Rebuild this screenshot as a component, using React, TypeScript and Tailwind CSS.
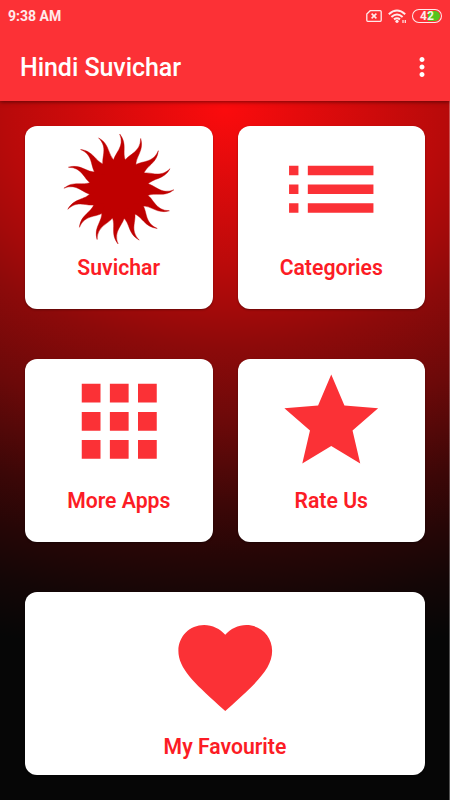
import React from "react";
import { MdApps, MdFavorite, MdList, MdMoreVert, MdStar } from "react-icons/md";

const rays = Array.from({ length: 16 }, (_, i) => i * 22.5);

const SunIcon = () => (
  <svg viewBox="-55.9 -56 112.5 112.5" className="size-[112.5px] fill-[#bf0000] stroke-[#bf0000]" strokeWidth=".4">
    <circle r="29" />
    {rays.map((angle) => (
      <path
        key={angle}
        transform={`rotate(${angle})`}
        d="M-5.4 -28.2C-4 -36.5 6 -42 .8 -55C9 -45 2.6 -36 7 -28L0 -20Z"
      />
    ))}
  </svg>
);

const StatusBar = () => (
  <div className="flex h-8 items-center justify-between pl-2 pr-2 text-white/90">
    <span className="text-[14px] font-bold leading-4">9:38 AM</span>
    <div className="flex items-center">
      <svg viewBox="0 0 16 12" className="h-3 w-4" fill="none" stroke="currentColor">
        <path d="M4.2 .7H14.2Q15.2 .7 15.2 1.7V10.3Q15.2 11.3 14.2 11.3H1.8Q.8 11.3 .8 10.3V4Z" strokeWidth="1.3" />
        <path d="M5.6 3.7L10.4 8.3M10.4 3.7L5.6 8.3" strokeWidth="1.6" />
      </svg>
      <svg viewBox="0 0 20 15" className="ml-[6px] mr-[4px] h-[15px] w-5" fill="none" stroke="currentColor">
        <path d="M.8 5.2Q9 -2.2 17.2 5.2M3.4 8Q9 3 14.6 8M6 10.4Q9 8 12 10.4" strokeWidth="2" />
        <circle cx="9" cy="12.3" r="1.6" fill="currentColor" stroke="none" />
        <path d="M15 11V14M17.3 11V14" strokeWidth="1.2" />
      </svg>
      <div className="flex h-[14px] w-[30px] items-center justify-center rounded-full border-[1.5px] border-current bg-[linear-gradient(to_right,transparent_53%,#55c41d_53%)] bg-clip-content p-px text-[12px] font-bold leading-none">
        42
      </div>
    </div>
  </div>
);

const Card = ({ label, className = "pt-[6px]", children }: any) => (
  <button
    className={`flex h-[183px] flex-col items-center rounded-[12px] bg-white text-[#fc1c25] shadow-[0_1px_2px_rgba(0,0,0,0.35)] ${className}`}
  >
    <span className="text-[#fb3136]">{children}</span>
    <span className="mt-[9px] text-[21.2px] font-semibold leading-[28px]">{label}</span>
  </button>
);

export default function App() {
  return (
    <div className="flex h-[800px] w-[450px] flex-col overflow-hidden bg-[#060606] font-['Roboto',sans-serif]">
      <header className="z-10 h-[101px] shrink-0 bg-[#fc3136] text-white shadow-[0_1px_4px_rgba(0,0,0,0.5)]">
        <StatusBar />
        <div className="flex h-[69px] items-center justify-between pl-5 pr-[13px] pt-[2px]">
          <h1 className="text-[25px] font-medium leading-8 tracking-[-0.05px]">Hindi Suvichar</h1>
          <MdMoreVert className="mb-[2px] size-[30px]" />
        </div>
      </header>
      <main className="grid grow grid-cols-2 content-start gap-x-[25px] gap-y-[50px] border-r border-white/30 bg-[radial-gradient(760px_550px_at_225px_9px,#fb0b0d_0%,#b80a0a_29%,#a40a0a_36%,#8d0a0a_43%,#6b0909_57%,#3c0707_72%,#260606_81%,#140606_90%,#060606_100%)] pl-[25px] pr-6 pt-[25px]">
        <Card label="Suvichar" className="pt-[6.6px]">
          <SunIcon />
        </Card>
        <Card label="Categories" className="pt-[6.6px]">
          <MdList className="size-[112.5px]" />
        </Card>
        <Card label="More Apps">
          <MdApps className="size-[112.5px]" />
        </Card>
        <Card label="Rate Us">
          <MdStar className="size-[112.5px]" />
        </Card>
        <Card label="My Favourite" className="col-span-2 pt-[19px]">
          <MdFavorite className="size-[112.5px]" />
        </Card>
      </main>
    </div>
  );
}
